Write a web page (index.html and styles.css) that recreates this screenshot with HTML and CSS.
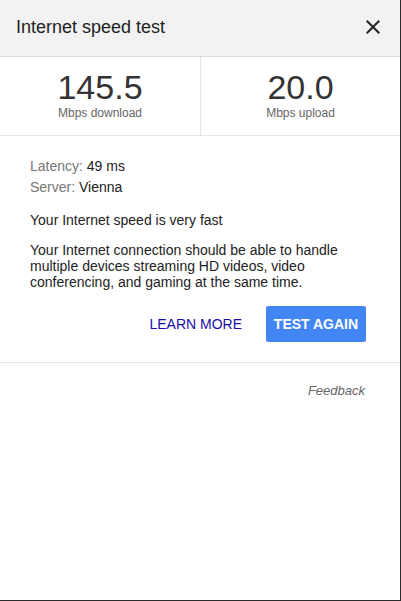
FILE: index.html
```html
<!DOCTYPE html>
<html lang="en">
<head>
<meta charset="utf-8">
<title>Internet speed test</title>
<link rel="stylesheet" href="styles.css">
</head>
<body>
<div class="panel">
  <header class="header">
    <h1 class="title">Internet speed test</h1>
    <button class="close" aria-label="Close">
      <svg width="24" height="24" viewBox="0 0 24 24"><path d="M19 6.41L17.59 5 12 10.59 6.41 5 5 6.41 10.59 12 5 17.59 6.41 19 12 13.41 17.59 19 19 17.59 13.41 12z" fill="#222"/></svg>
    </button>
  </header>
  <section class="stats">
    <div class="stat">
      <div class="stat-value">145.5</div>
      <div class="stat-label">Mbps download</div>
    </div>
    <div class="stat stat-right">
      <div class="stat-value">20.0</div>
      <div class="stat-label">Mbps upload</div>
    </div>
  </section>
  <section class="details">
    <div class="info">
      <div class="info-line"><span class="info-key">Latency:</span> 49 ms</div>
      <div class="info-line"><span class="info-key">Server:</span> Vienna</div>
    </div>
    <p class="verdict">Your Internet speed is very fast</p>
    <p class="desc">Your Internet connection should be able to handle multiple devices streaming HD videos, video conferencing, and gaming at the same time.</p>
    <div class="actions">
      <a class="learn" href="#">LEARN MORE</a>
      <button class="again">TEST AGAIN</button>
    </div>
  </section>
  <footer class="footer">
    <a class="feedback" href="#">Feedback</a>
  </footer>
</div>
</body>
</html>
```
FILE: styles.css
```css
* { box-sizing: border-box; }
html, body { margin: 0; padding: 0; background: #fff; }
body { font-family: "Liberation Sans", Arial, sans-serif; color: #222; }

.panel {
  width: 401px;
  height: 601px;
  border-right: 1px solid #2b2b2b;
  border-bottom: 1px solid #2b2b2b;
  background: #fff;
}

.header {
  height: 57px;
  background: #f2f2f2;
  border-bottom: 1px solid #dcdcdc;
  display: flex;
  align-items: center;
  justify-content: space-between;
  padding: 0 15px 2px 16px;
}
.title {
  margin: 0;
  font-size: 18px;
  font-weight: normal;
  color: #222;
}
.close {
  border: 0;
  background: none;
  padding: 0;
  width: 24px;
  height: 24px;
  display: block;
  cursor: pointer;
}
.close svg { display: block; }

.stats {
  display: grid;
  grid-template-columns: 200px 1fr;
  border-bottom: 1px solid #e6e6e6;
  height: 79px;
}
.stat {
  display: flex;
  flex-direction: column;
  align-items: center;
  padding-top: 13px;
}
.stat-right { border-left: 1px solid #e6e6e6; }
.stat-value {
  font-size: 34px;
  line-height: 34px;
  color: #333;
}
.stat-label {
  font-size: 12px;
  line-height: 14px;
  color: #666;
  margin-top: 2px;
}

.details {
  padding: 20px 34px 20px 30px;
  border-bottom: 1px solid #e6e6e6;
  font-size: 14px;
}
.info-line {
  line-height: 21px;
}
.info-key { color: #777; }
.verdict {
  margin: 12px 0 0;
  line-height: 20px;
}
.desc {
  margin: 12px 0 0;
  line-height: 16px;
}
.actions {
  margin-top: 16px;
  display: flex;
  justify-content: flex-end;
  align-items: center;
  gap: 24px;
}
.learn {
  color: #1a0dab;
  text-decoration: none;
  font-size: 14px;
}
.again {
  height: 36px;
  width: 100px;
  border: 0;
  border-radius: 2px;
  background: #4285f4;
  color: #fff;
  font-family: "Liberation Sans", Arial, sans-serif;
  font-size: 14px;
  font-weight: bold;
  padding: 0;
}

.footer {
  display: flex;
  justify-content: flex-end;
  padding: 20px 35px 0 0;
}
.feedback {
  font-size: 13px;
  line-height: 16px;
  font-style: italic;
  color: #666;
  text-decoration: none;
}
```
